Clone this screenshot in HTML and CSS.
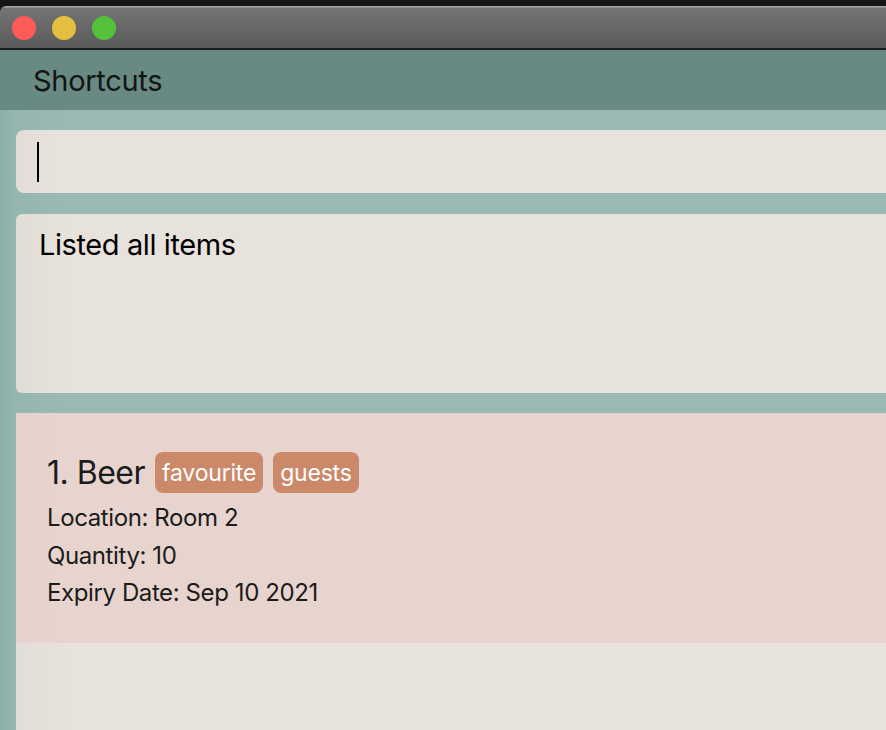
FILE: index.html
```html
<!DOCTYPE html>
<html>
<head>
<meta charset="utf-8">
<link rel="stylesheet" href="styles.css">
</head>
<body>
<div class="frame">
  <div class="titlebar">
    <span class="light red"></span>
    <span class="light yellow"></span>
    <span class="light green"></span>
  </div>
  <div class="menubar"><span class="menu-item">Shortcuts</span></div>
  <div class="content">
    <div class="command-box"><span class="caret"></span></div>
    <div class="result-box">Listed all items</div>
    <div class="list">
      <div class="cell">
        <div class="cell-head">
          <span class="item-name">1. Beer</span>
          <span class="tag">favourite</span>
          <span class="tag">guests</span>
        </div>
        <div class="field">Location: Room 2</div>
        <div class="field">Quantity: 10</div>
        <div class="field">Expiry Date: Sep 10 2021</div>
      </div>
      <div class="empty"></div>
    </div>
  </div>
</div>
</body>
</html>
```

FILE: styles.css
```css
html, body {
  margin: 0;
  padding: 0;
  background: #141414;
  overflow: hidden;
}
body {
  width: 886px;
  height: 730px;
  font-family: Inter, "Noto Sans", sans-serif;
}
.frame {
  margin-top: 6px;
  width: 920px;
  height: 724px;
  border-top-left-radius: 6px;
  overflow: hidden;
  display: flex;
  flex-direction: column;
}
.titlebar {
  flex: none;
  background: linear-gradient(#a6a6a6 0, #a6a6a6 1px, #747474 2px, #5a5a5a 100%);
  border-bottom: 2px solid #1c1c1c;
  display: flex;
  align-items: center;
  padding-left: 12px;
  gap: 16px;
  box-sizing: border-box;
  height: 44px;
}
.light {
  width: 24px;
  height: 24px;
  border-radius: 50%;
  display: block;
  margin-top: 2px;
}
.red { background: #fd5b57; }
.yellow { background: #e6be3f; }
.green { background: #55c13b; }
.menubar {
  height: 60px;
  flex: none;
  background: #688a83;
  display: flex;
  align-items: center;
  padding-left: 33px;
}
.menu-item {
  font-size: 29px;
  color: #121514;
  letter-spacing: -0.3px;
  margin-top: 1px;
}
.content {
  flex: 1;
  background: linear-gradient(to right, #8fb0a9 0, #95b5af 16px, #9ab9b3 60px);
  padding: 20px 0 0 16px;
  display: flex;
  flex-direction: column;
}
.command-box {
  height: 63px;
  flex: none;
  background: linear-gradient(to right, #e4ddd7 0, #e8e2dc 40px);
  border-radius: 8px 0 0 8px;
  display: flex;
  align-items: center;
  padding-left: 21px;
}
.caret {
  display: block;
  width: 2px;
  height: 40px;
  background: #000;
}
.result-box {
  margin-top: 21px;
  height: 179px;
  flex: none;
  background: linear-gradient(to right, #e2dcd6 0, #e8e2dc 50px);
  border-radius: 6px 0 0 6px;
  box-sizing: border-box;
  padding: 13px 0 0 23px;
  font-size: 29px;
  color: #000;
  letter-spacing: -0.4px;
}
.list {
  margin-top: 20px;
  flex: 1;
  display: flex;
  flex-direction: column;
}
.cell {
  height: 230px;
  flex: none;
  background: linear-gradient(to right, #e5d2cd 0, #e8d4cf 40px);
  box-sizing: border-box;
  padding: 39px 0 0 31px;
  color: #1b1b1b;
}
.cell-head {
  display: flex;
  align-items: center;
  gap: 10px;
  height: 41px;
  margin-bottom: 6px;
}
.item-name {
  font-size: 32px;
  letter-spacing: -0.5px;
}
.tag {
  background: #cc896a;
  color: #fff;
  font-size: 23px;
  border-radius: 8px;
  height: 41px;
  display: flex;
  align-items: center;
  padding: 0 7px;
  letter-spacing: -0.2px;
}
.field {
  font-size: 24px;
  line-height: 37.5px;
  letter-spacing: -0.4px;
}
.empty {
  flex: 1;
  background: linear-gradient(to right, #e3ddd7 0, #e8e2dc 50px);
}
```
